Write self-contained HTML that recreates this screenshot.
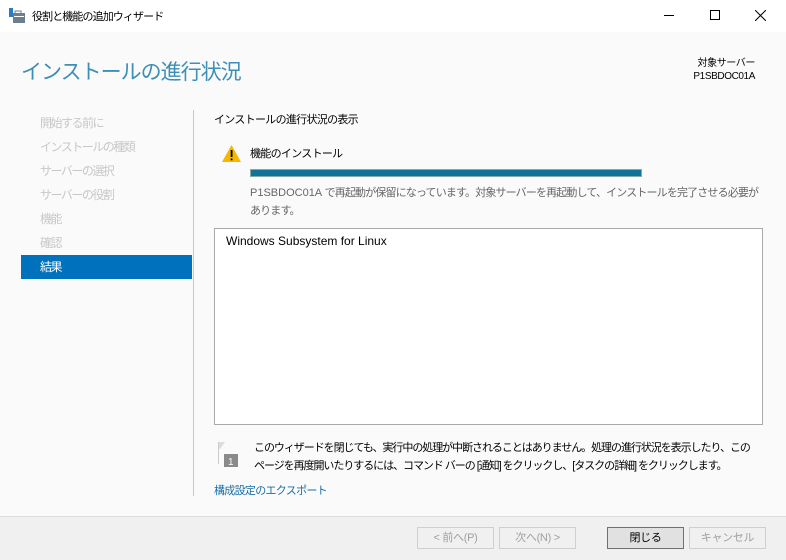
<!DOCTYPE html>
<html><head><meta charset="utf-8"><style>
*{margin:0;padding:0;box-sizing:border-box}
body{width:786px;height:560px;overflow:hidden;background:#fafafa;font-family:"Liberation Sans","Noto Sans CJK JP",sans-serif;font-size:11px;letter-spacing:-0.7px;color:#000;position:relative}
.a{position:absolute;white-space:nowrap}
.nav{position:absolute;left:21px;width:171px;height:24px;line-height:24px;padding-left:19px;color:#c8c8c8;font-size:12px;letter-spacing:-1.5px}
.btn{position:absolute;top:527px;height:22px;width:77px;border:1px solid #cfcfcf;background:#f0f0f0;color:#a0a0a0;text-align:center;line-height:20px;font-size:11px;letter-spacing:-0.3px}
.p{line-height:18px}
</style></head><body>
<div class="a" style="left:0;top:0;width:786px;height:32px;background:#fff"></div>
<svg class="a" style="left:9px;top:8px" width="16" height="15"><rect x="0" y="0" width="4" height="9" fill="#2b7cc0"/><rect x="4" y="5" width="12" height="10" fill="#6b7f8f"/><rect x="6" y="3" width="6" height="3" fill="none" stroke="#6b7f8f"/><rect x="5" y="8" width="10" height="1" fill="#fff"/></svg>
<div class="a" style="left:32px;top:8px;letter-spacing:-0.9px">役割と機能の追加ウィザード</div>
<div class="a" style="left:664px;top:15px;width:10px;height:1px;background:#000"></div>
<div class="a" style="left:710px;top:10px;width:10px;height:10px;border:1px solid #000"></div>
<svg class="a" style="left:755px;top:10px" width="11" height="11"><path d="M0 0L11 11M11 0L0 11" stroke="#000" stroke-width="1"/></svg>
<div class="a" style="left:21px;top:56px;font-size:21px;letter-spacing:-1px;color:#3d8fb5">インストールの進行状況</div>
<div class="a" style="right:31px;top:57px;font-size:10px;letter-spacing:-0.4px;text-align:right;line-height:13px">対象サーバー<br>P1SBDOC01A</div>
<div class="nav" style="top:111px">開始する前に</div>
<div class="nav" style="top:135px">インストールの種類</div>
<div class="nav" style="top:159px">サーバーの選択</div>
<div class="nav" style="top:183px">サーバーの役割</div>
<div class="nav" style="top:207px">機能</div>
<div class="nav" style="top:231px">確認</div>
<div class="nav" style="top:255px;background:#0071bc;color:#fff">結果</div>
<div class="a" style="left:193px;top:110px;width:1px;height:386px;background:#c8c8c8"></div>
<div class="a" style="left:214px;top:111px">インストールの進行状況の表示</div>
<svg class="a" style="left:222px;top:145px" width="19" height="17"><path d="M9.5 0L19 17H0Z" fill="#f5b800"/><rect x="8.7" y="5" width="1.8" height="7" fill="#000"/><rect x="8.7" y="13.5" width="1.8" height="1.8" fill="#000"/></svg>
<div class="a" style="left:250px;top:145px">機能のインストール</div>
<div class="a" style="left:250px;top:169px;width:392px;height:8px;background:#0e7396;border:1px solid #8aa"></div>
<div class="a p" style="left:250px;top:184px;color:#666;letter-spacing:-0.85px"><span style="letter-spacing:0">P1SBDOC01A </span>で再起動が保留になっています。対象サーバーを再起動して、インストールを完了させる必要が<br>あります。</div>
<div class="a" style="left:214px;top:228px;width:549px;height:197px;background:#fff;border:1px solid #a9a9a9"></div>
<div class="a" style="left:226px;top:234px;font-size:12px;letter-spacing:0">Windows Subsystem for Linux</div>
<svg class="a" style="left:217px;top:440px" width="24" height="28"><path d="M1 2L8 2L3 9L1 9Z" fill="#ddd"/><rect x="1" y="2" width="1" height="22" fill="#ccc"/><rect x="7" y="14" width="14" height="13" fill="#8a8a8a"/><text x="11" y="25" font-size="10" fill="#fff" font-family="Liberation Sans">1</text></svg>
<div class="a p" style="left:254px;top:439px;letter-spacing:-1.05px">このウィザードを閉じても、実行中の処理が中断されることはありません。処理の進行状況を表示したり、この<br>ページを再度開いたりするには、コマンド バーの [通知] をクリックし、[タスクの詳細] をクリックします。</div>
<div class="a" style="left:214px;top:482px;color:#1a6ea8">構成設定のエクスポート</div>
<div class="a" style="left:0;top:516px;width:786px;height:44px;background:#f0f0f0;border-top:1px solid #dcdcdc"></div>
<div class="btn" style="left:417px">&lt; 前へ(P)</div>
<div class="btn" style="left:499px">次へ(N) &gt;</div>
<div class="btn" style="left:607px;border-color:#707070;background:#e1e1e1;color:#000">閉じる</div>
<div class="btn" style="left:689px">キャンセル</div>
</body></html>
